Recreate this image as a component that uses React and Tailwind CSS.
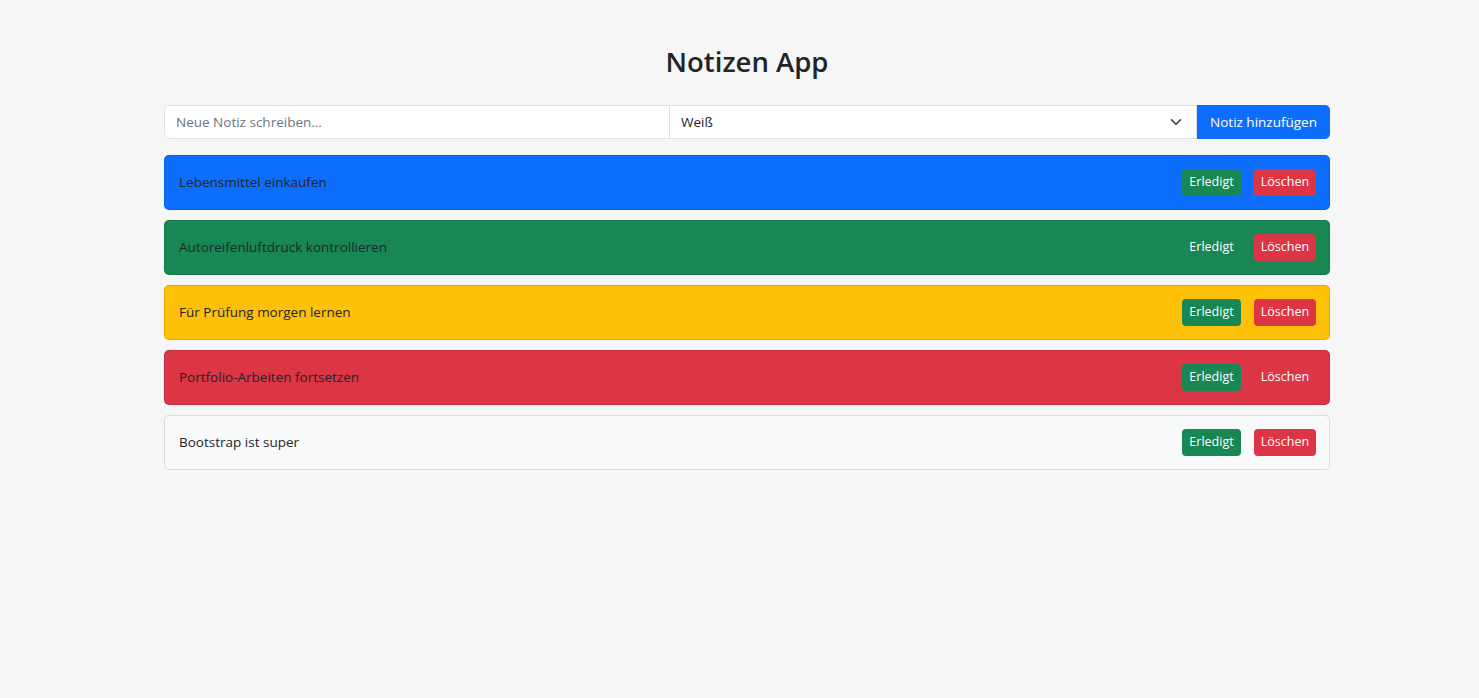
import React from "react";

const notes = [
  { text: "Lebensmittel einkaufen", bg: "bg-[#0d6efd]" },
  { text: "Autoreifenluftdruck kontrollieren", bg: "bg-[#198754]" },
  { text: "Für Prüfung morgen lernen", bg: "bg-[#ffc107]" },
  { text: "Portfolio-Arbeiten fortsetzen", bg: "bg-[#dc3545]" },
  { text: "Bootstrap ist super", bg: "bg-[#f8f9fa]" },
];

const App = () => {
  return (
    <div
      className="min-h-screen bg-[#f6f6f6] text-[#212529] pt-[45px]"
      style={{ fontFamily: '"Open Sans", "Noto Sans", sans-serif' }}
    >
      <div className="w-[1166px] ml-[164px]">
        {/* Title */}
        <h2 className="text-center text-[27.5px] font-semibold leading-[34px] mb-[26px]">Notizen App</h2>

        {/* Input group */}
        <div className="flex h-[34px] mb-[16px] text-[13.5px]">
          <input
            className="w-[506px] h-full bg-white border border-[#dee2e6] rounded-l-[5px] px-[11px] outline-none placeholder:text-[#6c757d]"
            placeholder="Neue Notiz schreiben..."
          />
          <div className="flex-1 h-full bg-white border border-l-0 border-[#dee2e6] flex items-center justify-between pl-[11px] pr-[14px]">
            <span>Weiß</span>
            <svg width="12" height="12" viewBox="0 0 16 16" fill="none">
              <path d="m2 5 6 6 6-6" stroke="#343a40" strokeWidth="2" strokeLinecap="round" strokeLinejoin="round" />
            </svg>
          </div>
          <button className="w-[133px] h-full bg-[#0d6efd] text-white rounded-r-[5px]">Notiz hinzufügen</button>
        </div>

        {/* Notes */}
        <div className="flex flex-col gap-[10px]">
          {notes.map((n) => (
            <div
              key={n.text}
              className={`${n.bg} h-[55px] rounded-[5px] border border-black/[0.12] flex items-center justify-between pl-[14px] pr-[13px] text-[13.5px]`}
            >
              <span>{n.text}</span>
              <div className="flex gap-[13px] text-[12.5px] text-white">
                <button className="h-[27px] w-[59px] bg-[#198754] rounded-[4px]">Erledigt</button>
                <button className="h-[27px] w-[62px] bg-[#dc3545] rounded-[4px]">Löschen</button>
              </div>
            </div>
          ))}
        </div>
      </div>
    </div>
  );
};

export default App;
